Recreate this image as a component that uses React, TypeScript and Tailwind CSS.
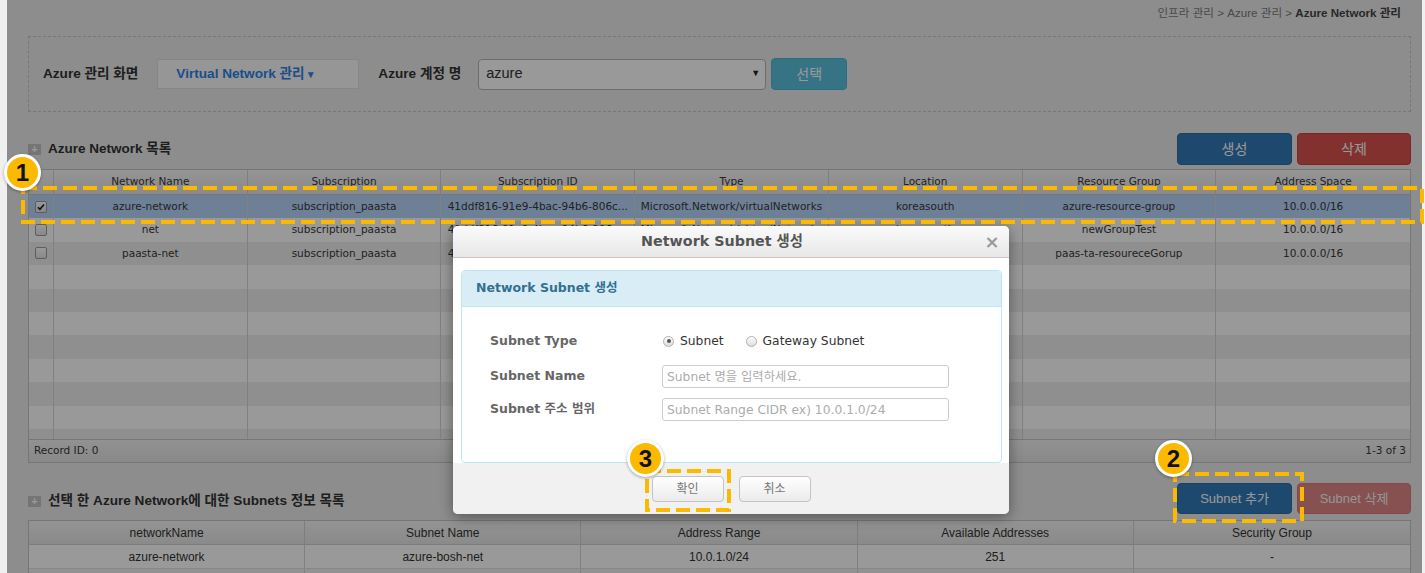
import React from 'react';

// w2ui grid look: Verdana-ish body text, Arial-ish page labels
const GRID_FONT = "font-['DejaVu_Sans','Noto_Sans_CJK_KR',sans-serif]";
const PAGE_FONT = "font-['Liberation_Sans','Noto_Sans_CJK_KR',sans-serif]";

type Network = {
  name: string;
  subscription: string;
  subscriptionId: string;
  type: string;
  location: string;
  group: string;
  space: string;
  checked?: boolean;
};

const networks: Network[] = [
  {
    name: 'azure-network',
    subscription: 'subscription_paasta',
    subscriptionId: '41ddf816-91e9-4bac-94b6-806c...',
    type: 'Microsoft.Network/virtualNetworks',
    location: 'koreasouth',
    group: 'azure-resource-group',
    space: '10.0.0.0/16',
    checked: true,
  },
  {
    name: 'net',
    subscription: 'subscription_paasta',
    subscriptionId: '41ddf816-91e9-4bac-94b6-806c...',
    type: 'Microsoft.Network/virtualNetworks',
    location: 'koreasouth',
    group: 'newGroupTest',
    space: '10.0.0.0/16',
  },
  {
    name: 'paasta-net',
    subscription: 'subscription_paasta',
    subscriptionId: '41ddf816-91e9-4bac-94b6-806c...',
    type: 'Microsoft.Network/virtualNetworks',
    location: 'koreasouth',
    group: 'paas-ta-resoureceGorup',
    space: '10.0.0.0/16',
  },
];

const networkColumns = ['Network Name', 'Subscription', 'Subscription ID', 'Type', 'Location', 'Resource Group', 'Address Space'];
const subnetColumns = ['networkName', 'Subnet Name', 'Address Range', 'Available Addresses', 'Security Group'];

function Checkbox({ checked }: { checked?: boolean }) {
  return (
    <span className="w-[12px] h-[12px] rounded-[2px] border border-[#9c9c9c] bg-linear-to-b from-white to-[#e4e4e4] flex items-center justify-center">
      {checked && (
        <svg viewBox="0 0 12 12" className="w-[10px] h-[10px]">
          <path d="M2.3 6.3l2.4 2.4 4.9-5.6" fill="none" stroke="#1a1a1a" strokeWidth={1.9} />
        </svg>
      )}
    </span>
  );
}

function SectionIcon() {
  return (
    <span className="w-[13px] h-[11px] bg-[#c4c4c4] flex items-center justify-center text-white text-[11px] font-bold leading-none">
      +
    </span>
  );
}

function Radio({ checked }: { checked?: boolean }) {
  return (
    <span className="w-[11px] h-[11px] rounded-full border border-[#b0b0b0] bg-linear-to-b from-white to-[#dcdcdc] flex items-center justify-center">
      {checked && <span className="w-[4px] h-[4px] rounded-full bg-[#555]" />}
    </span>
  );
}

function Badge({ n, className }: { n: number; className: string }) {
  return (
    <div
      className={`absolute w-[37px] h-[37px] rounded-full bg-[#fbb900] border-[3px] border-white shadow-[0_1px_3px_rgba(0,0,0,0.35)] flex items-center justify-center text-[24px] font-bold text-[#111] ${PAGE_FONT} ${className}`}
    >
      {n}
    </div>
  );
}

function DashedBox({ className, w, h }: { className: string; w: number; h: number }) {
  return (
    <svg className={`absolute ${className}`} width={w} height={h}>
      <rect x={2} y={2} width={w - 4} height={h - 4} fill="none" stroke="#fbb900" strokeWidth={4} strokeDasharray="14 6" />
    </svg>
  );
}

function NetworkTable() {
  const rows = Array.from({ length: 11 }, (_, i) => networks[i]);
  return (
    <div className={`mt-[4px] border border-[#c5c5c5] bg-white ${GRID_FONT} text-[10.5px] text-[#383838]`}>
      <div className="grid grid-cols-[25px_repeat(7,minmax(0,1fr))] h-[25px] bg-linear-to-b from-[#f8f8f8] to-[#e6e6e6] border-b border-[#c5c5c5]">
        <div className="border-r border-[#d2d2d2]" />
        {networkColumns.map((c) => (
          <div key={c} className="border-r border-[#d2d2d2] last:border-r-0 flex items-center justify-center">
            {c}
          </div>
        ))}
      </div>
      <div className="h-[244px] overflow-hidden">
        {rows.map((n, i) => {
          const bg = n?.checked ? 'bg-[#b6d5fb]' : i % 2 === 1 ? 'bg-white' : 'bg-[#efefef]';
          return (
            <div key={i} className={`grid grid-cols-[25px_repeat(7,minmax(0,1fr))] h-[23.4px] ${bg}`}>
              <div className="border-r border-[#d6d6d6] flex items-center justify-center">
                {n && <Checkbox checked={n.checked} />}
              </div>
              {(n
                ? [n.name, n.subscription, n.subscriptionId, n.type, n.location, n.group, n.space]
                : ['', '', '', '', '', '', '']
              ).map((v, j) => (
                <div
                  key={j}
                  className="border-r border-[#d6d6d6] last:border-r-0 px-[3px] flex items-center justify-center min-w-0"
                >
                  <span className="whitespace-nowrap">{v}</span>
                </div>
              ))}
            </div>
          );
        })}
      </div>
      <div className="h-[23px] border-t border-[#c5c5c5] bg-linear-to-b from-[#f3f3f3] to-[#e4e4e4] flex items-center justify-between pl-[5px] pr-[4px]">
        <span>Record ID: 0</span>
        <span>1-3 of 3</span>
      </div>
    </div>
  );
}

function SubnetTable() {
  return (
    <div className={`mt-[6px] border border-[#c5c5c5] bg-white ${PAGE_FONT} text-[12px] text-[#333]`}>
      <div className="grid grid-cols-5 h-[24px] bg-linear-to-b from-[#f6f6f6] to-[#e6e6e6] border-b border-[#cfcfcf]">
        {subnetColumns.map((c) => (
          <div key={c} className="border-r border-[#d2d2d2] last:border-r-0 flex items-center justify-center">
            {c}
          </div>
        ))}
      </div>
      <div className="grid grid-cols-5 h-[24px] bg-white border-b border-[#e2e2e2]">
        {['azure-network', 'azure-bosh-net', '10.0.1.0/24', '251', '-'].map((v, i) => (
          <div key={i} className="border-r border-[#d6d6d6] last:border-r-0 flex items-center justify-center">
            {v}
          </div>
        ))}
      </div>
      <div className="grid grid-cols-5 h-[24px] bg-[#f3f3f3]">
        {[0, 1, 2, 3, 4].map((i) => (
          <div key={i} className="border-r border-[#d6d6d6] last:border-r-0" />
        ))}
      </div>
    </div>
  );
}

function SubnetModal() {
  return (
    <div
      className={`absolute left-[453px] top-[226px] w-[556px] h-[288px] bg-white rounded-[5px] shadow-[0_3px_14px_rgba(0,0,0,0.4)] overflow-hidden flex flex-col ${GRID_FONT}`}
    >
      <div className="h-[32px] shrink-0 flex items-center pl-[12px] pr-[4px] bg-linear-to-b from-[#fafafa] to-[#e8e8e8] border-b border-[#c6c6c6]">
        <span className="flex-1 text-center text-[14.3px] font-bold text-[#555]">Network Subnet 생성</span>
        <span className="w-[26px] text-center text-[18px] font-bold text-[#9a9a9a] leading-none">×</span>
      </div>

      <div className="pl-[8px] pr-[7px] pt-[12px]">
        <div className="h-[193px] border border-[#bce8f1] rounded-[4px] overflow-hidden">
          <div className="h-[36px] bg-[#d9edf7] border-b border-[#bce8f1] flex items-center pl-[14px] text-[12.5px] font-bold text-[#31708f]">
            Network Subnet 생성
          </div>
          <div className="pl-[28px] pt-[22px] text-[12.3px]">
            <div className="grid grid-cols-[172px_287px] items-center h-[24px]">
              <span className="font-bold text-[12.5px] text-[#666]">Subnet Type</span>
              <div className="flex items-center pl-[1px] text-[#333]">
                <Radio checked />
                <span className="ml-[6px]">Subnet</span>
                <span className="ml-[22px]">
                  <Radio />
                </span>
                <span className="ml-[6px]">Gateway Subnet</span>
              </div>
            </div>
            <div className="grid grid-cols-[172px_287px] items-center mt-[12px]">
              <span className="font-bold text-[12.5px] text-[#666]">Subnet Name</span>
              <input
                readOnly
                placeholder="Subnet 명을 입력하세요."
                className="h-[23px] border border-[#cccccc] rounded-[3px] px-[4px] outline-none placeholder:text-[#acacac]"
              />
            </div>
            <div className="grid grid-cols-[172px_287px] items-center mt-[10px]">
              <span className="font-bold text-[12.5px] text-[#666]">Subnet 주소 범위</span>
              <input
                readOnly
                placeholder="Subnet Range CIDR ex) 10.0.1.0/24"
                className="h-[23px] border border-[#cccccc] rounded-[3px] px-[4px] outline-none placeholder:text-[#acacac]"
              />
            </div>
          </div>
        </div>
      </div>

      <div className="flex-1 bg-[#f1f1f1] flex justify-center gap-[15px] pt-[13px]">
        {['확인', '취소'].map((label) => (
          <button
            key={label}
            className="w-[72px] h-[26px] rounded-[4px] border border-[#c4c4c4] bg-linear-to-b from-white to-[#ebebeb] text-[12px] text-[#777]"
          >
            {label}
          </button>
        ))}
      </div>
    </div>
  );
}

export default function App() {
  return (
    <div className={`relative w-[1425px] h-[573px] overflow-hidden bg-[#f0f0f0] ${PAGE_FONT}`}>
      {/* page under the modal backdrop */}
      <div className="relative ml-[7px] w-[1415px] h-full bg-[#ececec] pl-[21px] pr-[11px]">
        <div className="h-[26px] flex items-center justify-end pr-[10px] text-[11.6px] text-[#7a7a7a]">
          인프라 관리 &gt; Azure 관리 &gt;&nbsp;<span className="font-bold text-[#444]">Azure Network 관리</span>
        </div>

        <div className="mt-[10px] h-[76px] border border-dashed border-[#c6c6c6] flex items-center pl-[14px]">
          <span className="text-[13.6px] font-bold text-[#333]">Azure 관리 화면</span>
          <div className="ml-[19px] w-[202px] h-[30px] bg-[#fbfbfb] border border-[#e0e0e0] flex items-center pl-[18px] text-[13.6px] font-bold text-[#2b83e8]">
            Virtual Network 관리<span className="text-[10px] ml-[1px]">▼</span>
          </div>
          <span className="ml-[19px] text-[13.6px] font-bold text-[#333]">Azure 계정 명</span>
          <div className="ml-[17px] w-[288px] h-[31px] bg-white border border-[#b4b4b4] rounded-[4px] flex items-center justify-between pl-[7px] pr-[5px] text-[14.5px] text-[#333]">
            <span>azure</span>
            <span className="text-[9px] text-[#222]">▼</span>
          </div>
          <button className="ml-[5px] w-[76px] h-[32px] rounded-[4px] bg-[#5bc0de] border border-[#46b8da] text-white text-[14px]">
            선택
          </button>
        </div>

        <div className="mt-[21px] h-[32px] flex items-center justify-between">
          <div className="flex items-center gap-[7px]">
            <SectionIcon />
            <span className="text-[13.5px] font-bold text-[#333]">Azure Network 목록</span>
          </div>
          <div className="flex gap-[5px]">
            <button className="w-[115px] h-[32px] rounded-[4px] bg-[#337ab7] border border-[#2e6da4] text-white text-[14px]">생성</button>
            <button className="w-[114px] h-[32px] rounded-[4px] bg-[#d9534f] border border-[#d43f3a] text-white text-[14px]">삭제</button>
          </div>
        </div>

        <NetworkTable />

        <div className="mt-[20px] h-[31px] flex items-center justify-between">
          <div className="flex items-center gap-[7px] pt-[6px]">
            <SectionIcon />
            <span className="text-[13.6px] font-bold text-[#333]">선택 한 Azure Network에 대한 Subnets 정보 목록</span>
          </div>
          <div className="flex gap-[5px]">
            <button className="w-[115px] h-[31px] rounded-[4px] bg-[#337ab7] border border-[#2e6da4] text-white text-[13px]">Subnet 추가</button>
            <button className="w-[114px] h-[31px] rounded-[4px] bg-[#d9534f] border border-[#d43f3a] text-white text-[13px] opacity-65">Subnet 삭제</button>
          </div>
        </div>

        <SubnetTable />

        {/* modal backdrop */}
        <div className="absolute inset-0 bg-black/40" />
      </div>

      <SubnetModal />

      {/* annotation marks */}
      <DashedBox className="left-[21px] top-[186px]" w={1403} h={38} />
      <DashedBox className="left-[1173px] top-[472px]" w={131} h={51} />
      <DashedBox className="left-[645px] top-[469px]" w={86} h={43} />
      <Badge n={1} className="left-[4px] top-[154px]" />
      <Badge n={2} className="left-[1155px] top-[440px]" />
      <Badge n={3} className="left-[627px] top-[440px]" />
    </div>
  );
}
